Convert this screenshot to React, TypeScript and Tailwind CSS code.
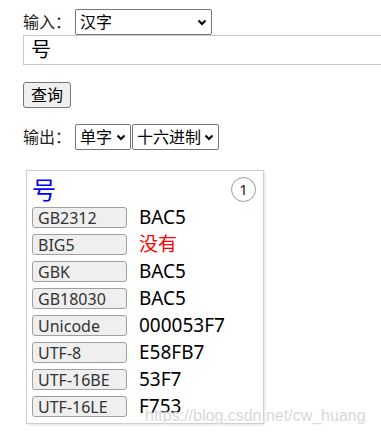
const font = {
  fontFamily: '"Noto Sans", "Noto Sans CJK SC", sans-serif',
};

const rows: { label: string; value: string; missing?: boolean }[] = [
  { label: "GB2312", value: "BAC5" },
  { label: "BIG5", value: "没有", missing: true },
  { label: "GBK", value: "BAC5" },
  { label: "GB18030", value: "BAC5" },
  { label: "Unicode", value: "000053F7" },
  { label: "UTF-8", value: "E58FB7" },
  { label: "UTF-16BE", value: "53F7" },
  { label: "UTF-16LE", value: "F753" },
];

function Chevron() {
  return (
    <svg width="10" height="7" viewBox="0 0 10 7" className="shrink-0">
      <path d="M1.5 1.5 L5 5 L8.5 1.5" fill="none" stroke="#000" strokeWidth="2" />
    </svg>
  );
}

function FakeSelect({ text, className = "" }: { text: string; className?: string }) {
  return (
    <div
      className={`flex h-[26px] items-center justify-between rounded-[2px] border border-[#767676] bg-white pl-[4px] pr-[4px] text-[16px] leading-none text-black ${className}`}
    >
      <span>{text}</span>
      <Chevron />
    </div>
  );
}

export default function App() {
  return (
    <div className="relative h-[436px] w-[381px] overflow-hidden bg-white text-black" style={font}>
      <div className="pl-[23px] pt-[9px]">
        <div className="flex items-center">
          <span className="w-[52px] text-[16px] leading-none text-[#222]">输入：</span>
          <FakeSelect text="汉字" className="w-[137px]" />
        </div>
        <div className="flex h-[30px] w-[400px] items-center border border-[#c8c8c8] pl-[7px] text-[20px] leading-none">
          号
        </div>
        <button
          type="button"
          className="mt-[17px] flex h-[26px] w-[48px] items-center justify-center rounded-[3px] border border-[#767676] bg-[#efefef] text-[16px] leading-none"
        >
          查询
        </button>
        <div className="mt-[16px] flex items-center">
          <span className="w-[52px] text-[16px] leading-none text-[#222]">输出：</span>
          <FakeSelect text="单字" className="w-[56px]" />
          <FakeSelect text="十六进制" className="ml-[1px] w-[87px]" />
        </div>
        <div className="ml-[3px] mt-[20px] h-[254px] w-[238px] border border-[#cfcfcf] px-[5px] pt-[6px] shadow-[1px_1px_2px_rgba(0,0,0,0.12)]">
          <div className="flex h-[30px] items-start justify-between">
            <span className="text-[24px] leading-[26px] text-[#0000ff]">号</span>
            <span className="mr-[2px] flex h-[25px] w-[25px] items-center justify-center rounded-full border border-[#999] text-[15px] leading-none text-[#222]">
              1
            </span>
          </div>
          <div className="flex flex-col gap-[6px]">
            {rows.map((r) => (
              <div key={r.label} className="flex items-center">
                <span className="flex h-[21px] w-[95px] items-center rounded-[3px] border border-[#a0a0a0] bg-[#efefef] pl-[5px] text-[16px] leading-none text-[#333]">
                  {r.label}
                </span>
                <span
                  className={`ml-[12px] text-[19px] leading-none ${r.missing ? "text-[#ff0000]" : "text-black"}`}
                >
                  {r.value}
                </span>
              </div>
            ))}
          </div>
        </div>
      </div>
      <span
        className="pointer-events-none absolute left-[145px] top-[408px] text-[16px] leading-none text-[#d8d8d8] [text-shadow:0_0_2px_#fff]"
        style={{ fontFamily: '"Liberation Sans", Arial, sans-serif' }}
      >
        https://blog.csdn.net/cw_huang
      </span>
    </div>
  );
}
